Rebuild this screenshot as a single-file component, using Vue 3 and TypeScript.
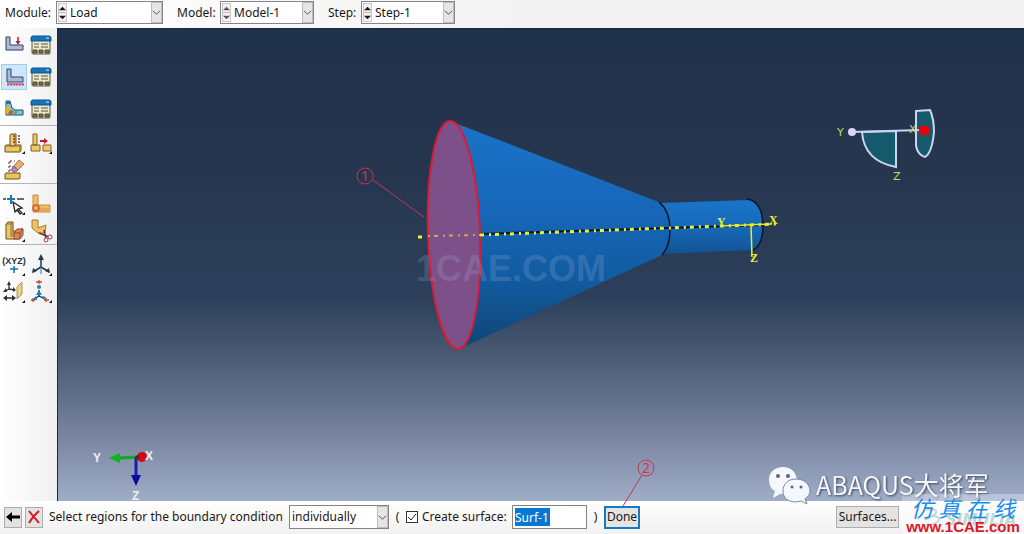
<script setup lang="ts">
import { ref } from 'vue'

interface Picker {
  id: string
  label: string
  value: string
  muted: boolean
}

const pickers: Picker[] = [
  { id: 'module', label: 'Module:', value: 'Load', muted: false },
  { id: 'model', label: 'Model:', value: 'Model-1', muted: true },
  { id: 'step', label: 'Step:', value: 'Step-1', muted: false }
]

const toolGroups: string[][] = [
  ['load', 'manager', 'bc', 'manager', 'field', 'manager'],
  ['partition', 'split', 'erase'],
  ['query', 'feature', 'solid', 'cut'],
  ['xyz', 'triad', 'plane', 'points']
]
const flyouts = ['partition', 'split', 'query', 'solid', 'xyz', 'triad', 'plane', 'points']

const createSurface = ref(true)
const surfaceName = ref('Surf-1')
</script>

<template>
  <div class="app">
    <header class="context-bar">
      <div v-for="p in pickers" :key="p.id" class="picker">
        <label :for="p.id">{{ p.label }}</label>
        <div class="combo" :class="p.id">
          <div class="spinner" :class="{ muted: p.muted }">
            <button type="button" aria-label="Previous"><svg viewBox="0 0 8 8"><path d="M0 6L4 2L8 6Z" /></svg></button>
            <button type="button" aria-label="Next"><svg viewBox="0 0 8 8"><path d="M0 2L4 6L8 2Z" /></svg></button>
          </div>
          <select :id="p.id"><option>{{ p.value }}</option></select>
          <span class="arrow"><svg viewBox="0 0 10 10"><path d="M1 3L5 7L9 3" /></svg></span>
        </div>
      </div>
    </header>

    <aside class="toolbox">
      <div v-for="(group, g) in toolGroups" :key="g" class="tool-group" :class="{ tall: g === 0, near: g === 1 }">
        <button v-for="(tool, i) in group" :key="i" type="button" class="tool" :class="{ active: tool === 'bc' }" :aria-label="tool">
          <svg viewBox="0 0 24 24">
            <g v-if="tool === 'manager'">
              <rect x="3" y="4" width="18" height="17" rx="1" fill="#eee9c9" stroke="#56584c" />
              <path d="M2 8V5Q2 3 4 3H20Q22 3 22 5V8Z" fill="#1474b5" stroke="#0a568e" />
              <path d="M17 5H20" stroke="#cfe9fb" />
              <path d="M5 11H10M12 11H19M5 14H10M12 14H19" stroke="#55564d" />
              <path d="M4 17H8V20H4ZM10 17H14V20H10ZM16 17H20V20H16Z" fill="#777043" stroke="#4e4d35" />
            </g>
            <g v-else-if="tool === 'load'">
              <path d="M4 4H8V12H21V17H4Z" fill="#acbdd8" stroke="#303b60" />
              <path d="M16 4V10" stroke="#a82735" stroke-width="1.500" />
              <path d="M13.500 8H18.500L16 12Z" fill="#a82735" />
            </g>
            <g v-else-if="tool === 'bc'">
              <path d="M5 4H9V12H21V17H5Z" fill="#a8b9d5" stroke="#374363" />
              <path d="M5 19H22" stroke="#c62b48" />
              <path d="M6 21V19M9 21V19M12 21V19M15 21V19M18 21V19M21 21V19" stroke="#c62b48" />
            </g>
            <g v-else-if="tool === 'field'">
              <path d="M4 4H8L10 11L13 13H21V18H4Z" fill="#75cbd1" stroke="#254d63" />
              <path d="M4 4H8V7H4Z" fill="#2a78a2" />
              <path d="M4 8L8 12L7 17H4Z" fill="#d5b72e" />
              <path d="M8 13L12 14L10 17H6Z" fill="#cf563b" />
              <path d="M13 14H16L14 17H11Z" fill="#4eae78" />
            </g>
            <g v-else-if="tool === 'partition'">
              <path d="M3 15L4 14H19V19L18 21H3Z" fill="#edc75e" stroke="#665027" />
              <path d="M8 4L9 3H14V13L13 15H8Z" fill="#efce73" stroke="#665027" />
              <path d="M3 15H18L19 14M18 15V21M13 5V14" fill="none" stroke="#957339" />
              <path d="M12 4V13M17 4V13" stroke="#8b3027" stroke-width="1.500" stroke-dasharray="2 1" />
            </g>
            <g v-else-if="tool === 'split'">
              <path d="M2 14H11V20H2ZM14 14H22V20H14ZM4 3H8V14H4Z" fill="#efca65" stroke="#80612e" />
              <path d="M11 10H16" stroke="#bd2130" stroke-width="2" />
              <path d="M15 7L19 10L15 13Z" fill="#bd2130" />
            </g>
            <g v-else-if="tool === 'erase'">
              <path d="M3 16L4 15H18V20L17 21H3Z" fill="#e8c653" stroke="#66532b" />
              <path d="M7 14V3H13M8 3V14" fill="none" stroke="#4e3344" stroke-dasharray="2 2" />
              <path d="M12 8L17 2L22 6L16 12Z" fill="#e1b17a" stroke="#b16f3d" />
              <path d="M11 8L16 12Q13 16 10 13Q9 11 11 8" fill="#b587aa" stroke="#875b82" />
            </g>
            <g v-else-if="tool === 'query'">
              <path d="M1 7H4M6 7H13M15 7H22" stroke="#343b42" stroke-width="1.500" />
              <path d="M9 3V12M5 7H13" stroke="#1d76b7" stroke-width="2" />
              <path d="M11 10L20 16L16 17L20 21L18 22L15 18L13 20Z" fill="#fff" stroke="#252525" stroke-width="1.300" />
            </g>
            <g v-else-if="tool === 'feature'">
              <path d="M4 3H9V13H21V20H4Z" fill="#efc066" stroke="#be8b43" />
              <path d="M5 15L21 16V20H5Z" fill="#e5a557" />
              <circle cx="7" cy="16" r="3" fill="#edb160" stroke="#d45b26" stroke-width="1.500" />
            </g>
            <g v-else-if="tool === 'solid'">
              <path d="M4 5L6 3H11V12H17L20 9V17L17 20H4Z" fill="#edc761" stroke="#684d29" />
              <path d="M11 12V18M4 5H9L11 3M9 5V18" fill="none" stroke="#93692f" />
              <path d="M12 14L15 10H21V16L18 20H12Z" fill="#d68b56" stroke="#9b4934" />
              <path d="M12 14H18L21 10M18 14V20" fill="none" stroke="#9b4934" />
            </g>
            <g v-else-if="tool === 'cut'">
              <path d="M3 1H9V9L17 6L16 14H9L3 9Z" fill="#f0c45d" stroke="#a27837" />
              <path d="M10 14L20 18M15 11L17 20" stroke="#6c3541" stroke-width="1.500" />
              <circle cx="21" cy="18" r="2" fill="#fff" stroke="#aa3945" />
              <circle cx="17" cy="21" r="2" fill="#fff" stroke="#aa3945" />
            </g>
            <g v-else-if="tool === 'xyz'">
              <text x="12" y="11" text-anchor="middle" font-size="9" font-family="Liberation Sans, sans-serif" font-weight="700" fill="#303030">(XYZ)</text>
              <path d="M12 13V20M8 16H16" stroke="#1571b8" stroke-width="1.500" />
            </g>
            <g v-else-if="tool === 'triad'">
              <path d="M12 3V14L4 19M12 14L20 19" fill="none" stroke="#28333a" stroke-width="1.500" />
              <path d="M12 3V21" stroke="#247db2" />
              <path d="M9 7L12 1L15 7ZM4 15L8 18L3 20ZM20 15L21 20L16 18Z" fill="#233b51" />
            </g>
            <g v-else-if="tool === 'plane'">
              <path d="M4 18H12M7 4V9L3 11M7 9L12 10" fill="none" stroke="#303030" stroke-width="1.300" />
              <path d="M1 18L5 15V21ZM14 18L10 15V21ZM5 5L7 1L9 5ZM1 12L4 8L5 12ZM11 7L14 10L11 12Z" fill="#303030" />
              <path d="M15 7L20 2V14L15 19Z" fill="#efd274" stroke="#9a9877" />
            </g>
            <g v-else>
              <path d="M10 10V16L4 20M10 16L16 19" fill="none" stroke="#252525" stroke-width="1.300" />
              <path d="M7 2H13M10 0V4M2 20H6M4 18V22M15 20H20M17 18V22" stroke="#cf432e" stroke-width="1.300" />
              <circle cx="10" cy="7" r="2" fill="#247fb5" />
              <path d="M10 10L13 15H7ZM13 16L17 17L15 20ZM7 16L3 20H8Z" fill="#1b80b6" />
            </g>
            <path v-if="flyouts.includes(tool)" d="M23 20V23H20Z" fill="#111" />
          </svg>
        </button>
      </div>
    </aside>

    <main class="viewport">
      <svg class="scene" viewBox="57 28 967 473">
        <defs>
          <linearGradient id="cone-fill" x1="0" y1="0" x2="0" y2="1">
            <stop offset="0" stop-color="#1974c9" />
            <stop offset=".35" stop-color="#1768bb" />
            <stop offset=".7" stop-color="#125b9f" />
            <stop offset="1" stop-color="#0f4474" />
          </linearGradient>
          <linearGradient id="tube-fill" x1="0" y1="0" x2="0" y2="1">
            <stop offset="0" stop-color="#1975ca" />
            <stop offset=".5" stop-color="#1769b9" />
            <stop offset="1" stop-color="#115393" />
          </linearGradient>
          <pattern id="mesh" width="2" height="2" patternUnits="userSpaceOnUse">
            <rect width="2" height="2" fill="#705493" />
            <path d="M0 0H1V1H0ZM1 1H2V2H1Z" fill="#8a4b80" />
          </pattern>
        </defs>

        <path d="M661 203L749 200Q763 203 763 225Q763 245 753 250L661 254Z" fill="url(#tube-fill)" />
        <path d="M747 199Q762 201 763 225Q763 245 753 250" fill="none" stroke="#07152c" stroke-width="1.500" />
        <path d="M450 121L661 203Q670 211 670 230Q670 246 662 255L459 349Z" fill="url(#cone-fill)" />
        <path d="M659 202Q670 211 670 230Q670 246 662 255" fill="none" stroke="#07152c" stroke-width="1.500" />
        <ellipse cx="454" cy="235" rx="26" ry="114" transform="rotate(-2 454 235)" fill="url(#mesh)" stroke="#d91c32" stroke-width="2" />

        <path d="M480 234L763 225" stroke="#07152c" stroke-width="2" />
        <path d="M418 237H422" stroke="#f0f52c" stroke-width="3" />
        <path d="M428 236L480 235" stroke="#d9a44a" stroke-width="2" stroke-dasharray="2 4 4 5" />
        <path d="M480 235L776 224" stroke="#e9f52e" stroke-width="3" stroke-dasharray="4 5 2 4" />
        <path d="M721 226L772 224M751 225L752 257" stroke="#e9e82e" stroke-width="1.500" />
        <g class="axis-text" fill="#e9ed38">
          <text x="717" y="226">Y</text><text x="769" y="224">X</text><text x="750" y="262">Z</text>
        </g>

        <text x="416" y="281" class="ghost">1CAE.COM</text>

        <g fill="#145a6c" stroke="#cdd3f1" stroke-width="2">
          <path d="M862 132Q864 161 896 167L896 131Z" />
          <path d="M916 111L930 110Q934 119 934 132Q932 153 925 157Q918 155 916 146Z" />
          <path d="M852 132L922 130" />
        </g>
        <circle cx="852" cy="132" r="4" fill="#e0d2f2" />
        <rect x="919" y="126" width="10" height="9" rx="2" fill="#e90008" />
        <g class="compass-text">
          <text x="837" y="136">Y</text><text x="909" y="133">X</text><text x="893" y="180">Z</text>
        </g>

        <path d="M120 458L137 457" stroke="#0bad19" stroke-width="3" />
        <path d="M109 458L120 453V463Z" fill="#08b818" />
        <path d="M136 457V476" stroke="#1c1da1" stroke-width="3" />
        <path d="M131 475H141L136 486Z" fill="#080da0" />
        <circle cx="142" cy="457" r="5" fill="#d40713" />
        <path d="M135 457L139 454V460Z" fill="#78151c" />
        <g class="triad-text">
          <text x="93" y="462">Y</text><text x="145" y="460">X</text><text x="132" y="500">Z</text>
        </g>

        <g class="callout">
          <circle cx="365" cy="176" r="8" />
          <path d="M373 180L424 217" />
          <text x="365" y="181">1</text>
          <circle cx="646" cy="468" r="8" />
          <path d="M642 475L623 506" />
          <text x="646" y="473">2</text>
        </g>

        <g class="account">
          <path d="M783 467C775 467 769 472 769 480C769 485 771 489 775 491L773 498L780 494C792 495 798 488 797 480C796 472 791 467 783 467Z" fill="#f4f7fc" />
          <path d="M796 479C788 479 783 484 783 491C783 498 788 502 796 502L801 501L807 504L805 499C808 497 810 494 810 491C810 484 804 479 796 479Z" fill="#f4f7fc" stroke="#7d899f" />
          <g fill="#59677d"><circle cx="778" cy="476" r="2" /><circle cx="788" cy="476" r="2" /><circle cx="792" cy="487" r="1.500" /><circle cx="801" cy="487" r="1.500" /></g>
          <text x="816" y="495">ABAQUS大将军</text>
        </g>
      </svg>
    </main>

    <footer class="prompt-bar">
      <button type="button" class="icon-button" aria-label="Back"><svg viewBox="0 0 16 16"><path d="M1 8L7 3V6.500H15V9.500H7V13Z" /></svg></button>
      <button type="button" class="icon-button cancel" aria-label="Cancel"><svg viewBox="0 0 16 16"><path d="M3 2C6 6 9 9 13 14M13 2C8 6 6 9 3 14" /></svg></button>
      <label for="method" class="prompt">Select regions for the boundary condition</label>
      <div class="combo method">
        <select id="method"><option>individually</option></select>
        <span class="arrow"><svg viewBox="0 0 10 10"><path d="M1 3L5 7L9 3" /></svg></span>
      </div>
      <span class="paren">(</span>
      <label class="check">
        <span class="tick-box">
          <input v-model="createSurface" type="checkbox" />
          <svg v-if="createSurface" viewBox="0 0 12 12"><path d="M2 6L5 9L10 3" /></svg>
        </span>
        <span>Create surface:</span>
      </label>
      <div class="name-field">
        <input v-model="surfaceName" type="text" size="5" aria-label="Surface name" />
      </div>
      <span class="paren">)</span>
      <button type="button" class="done">Done</button>
      <button type="button" class="surfaces">Surfaces...</button>
      <div class="brand">
        <svg viewBox="0 0 24 22"><path d="M5 3Q18 1 15 7Q12 11 3 12M11 10Q20 10 18 15Q14 20 5 19M3 14L10 11" /></svg>
        <span>SIMULIA</span>
      </div>
    </footer>

    <div class="site-mark">
      <span class="site-name"><span v-for="c in '仿真在线'" :key="c">{{ c }}</span></span>
      <span class="site-url">www.1CAE.com</span>
    </div>
  </div>
</template>

<style>
body { margin: 0; overflow: hidden; }
</style>

<style scoped>
.app {
  position: relative;
  display: grid;
  grid-template: 28px minmax(0, 1fr) 33px / 57px minmax(0, 1fr);
  height: 100vh;
  background: #f5f5f5;
  color: #181818;
  font: 12px/16px "Noto Sans", "Open Sans", "Noto Sans CJK SC", sans-serif;
}
.app * { box-sizing: border-box; }
button, select, input { font: inherit; color: inherit; margin: 0; padding: 0; }
.context-bar {
  grid-column: 1 / -1;
  display: flex;
  align-items: flex-start;
  gap: 14px;
  padding: 1px 5px 0;
  background: linear-gradient(90deg, #fff, #f3f3f3 50%);
}
.picker { display: flex; align-items: center; justify-content: space-between; }
.picker:nth-child(1) { width: 158px; }
.picker:nth-child(2) { width: 137px; }
.picker:nth-child(3) { width: 127px; }
.combo {
  display: flex;
  height: 23px;
  border: 1px solid #858585;
  background: #fff;
}
.module { width: 107px; }
.model, .step { width: 94px; }
.combo select {
  flex: 1;
  min-width: 0;
  border: 0;
  appearance: none;
  background: transparent;
  padding-left: 2px;
  outline: 0;
}
.spinner {
  display: flex;
  flex-direction: column;
  width: 9px;
  margin: 1px;
  border: 1px solid #c8c8c8;
}
.spinner button { flex: 1; display: flex; align-items: center; border: 0; background: #f3f3f3; }
.spinner button + button { border-top: 1px solid #bbb; }
.spinner svg { width: 7px; height: 7px; }
.muted { color: #555; }
.spinner path { fill: currentColor; }
.arrow {
  display: flex;
  align-items: center;
  justify-content: center;
  width: 11px;
  border: 1px solid #bdbdbd;
  background: #e5e5e5;
  pointer-events: none;
}
.arrow svg { width: 9px; flex: none; fill: none; stroke: #444; }
.toolbox { background: linear-gradient(90deg, #fff, #f0f0f0); }
.tool-group {
  display: grid;
  grid-template-columns: 27px 27px;
  grid-auto-rows: 27px;
  align-items: center;
  padding: 6px 0 0 1px;
  border-bottom: 1px solid #b5b5b5;
}
.tool-group:last-child { border: 0; }
.tall { grid-auto-rows: 32px; padding-top: 1px; }
.near { padding-top: 3px; }
.tool { width: 26px; height: 26px; border: 1px solid transparent; background: none; }
.tool svg { display: block; width: 24px; height: 24px; overflow: visible; }
.active { border-color: #a3cbea; background: #cfe6fa; }
.viewport {
  position: relative;
  z-index: 1;
  box-shadow: inset 1px 1px #1b2940;
  background: linear-gradient(#20314b, #26364f 30%, #2d3f5a 57%, #4a5972 69%, #67748d 80%, #8490ab 90%, #9fadc9);
}
.scene { display: block; width: 100%; height: 100%; overflow: visible; }
.axis-text { font: 700 12px "Liberation Serif", serif; }
.compass-text { font: 11px "DejaVu Sans", sans-serif; fill: #c5da69; }
.triad-text { font: 700 12px "Liberation Sans", sans-serif; fill: #eef0f5; }
.ghost { font: 700 36px "Liberation Sans", sans-serif; fill: #a8c3e2; fill-opacity: .2; }
.callout { fill: none; stroke: #c43650; }
.callout text { font: 14px "Noto Sans", sans-serif; fill: #d43451; stroke: none; text-anchor: middle; }
.account text {
  font: 25px "Noto Sans CJK SC", sans-serif;
  fill: #f4f6fa;
  filter: drop-shadow(1px 1px 1px #3c475a);
}
.prompt-bar {
  grid-column: 1 / -1;
  display: flex;
  align-items: center;
  padding: 0 0 1px 4px;
  background: linear-gradient(#fff, #f1f1f1);
  white-space: nowrap;
}
.icon-button {
  display: grid;
  place-items: center;
  width: 18px;
  height: 21px;
  margin-right: 3px;
  border: 1px solid #adadad;
  background: #e3e3e3;
}
.icon-button svg { width: 16px; }
.cancel svg { fill: none; stroke: #d71920; stroke-width: 2; }
.prompt { width: 240px; margin-left: 3px; }
.method { width: 100px; height: 24px; }
.paren { width: 17px; text-align: center; }
.check { display: flex; align-items: center; gap: 4px; width: 106px; }
.tick-box { display: grid; width: 12px; height: 12px; }
.tick-box > * { grid-area: 1 / 1; width: 12px; height: 12px; }
.tick-box input { appearance: none; border: 1px solid #333; background: #fff; }
.tick-box svg { position: relative; fill: none; stroke: #222; pointer-events: none; }
.name-field {
  display: flex;
  align-items: center;
  width: 75px;
  height: 24px;
  padding: 2px;
  border: 1px solid #858585;
  background: #fff;
}
.name-field input { width: 35px; height: 18px; border: 0; outline: 0; background: #0877d1; color: #fff; }
.done { width: 36px; height: 23px; border: 2px solid #1879bd; background: #e4e4e4; }
.surfaces { width: 63px; height: 22px; margin-left: auto; border: 1px solid #adadad; background: #e3e3e3; }
.brand {
  display: flex;
  align-items: center;
  gap: 2px;
  width: 102px;
  margin-left: 23px;
  color: #9bccc2;
  font: italic 700 15px/20px "DejaVu Sans", sans-serif;
}
.brand svg { width: 22px; flex: none; fill: none; stroke: currentColor; stroke-width: 2; }
.brand span { padding-top: 6px; }
.site-mark {
  position: absolute;
  z-index: 2;
  right: 0;
  bottom: 0;
  display: flex;
  flex-direction: column;
  align-items: center;
  width: 122px;
  height: 40px;
  background: rgba(255, 255, 255, .3);
  white-space: nowrap;
}
.site-name {
  display: flex;
  justify-content: space-between;
  width: 104px;
  font: italic 22px/26px "Noto Sans CJK SC", sans-serif;
  color: #168af0;
}
.site-url { font: 700 15px/14px "Liberation Sans", sans-serif; color: #df1729; }
</style>
